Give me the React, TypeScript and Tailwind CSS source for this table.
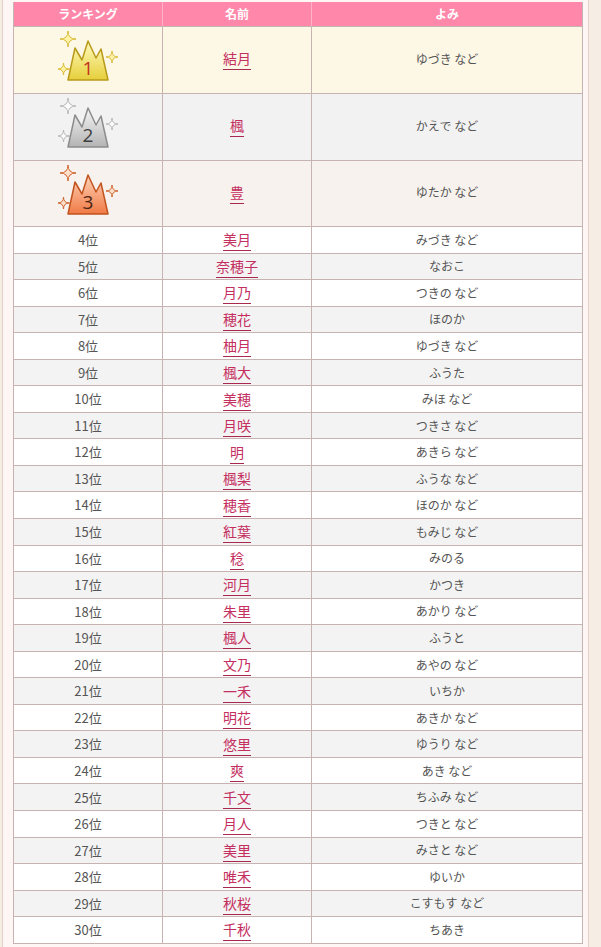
import React from "react";

type Row = { rank: number; name: string; yomi: string };

const rows: Row[] = [
  { rank: 4, name: "美月", yomi: "みづき など" },
  { rank: 5, name: "奈穂子", yomi: "なおこ" },
  { rank: 6, name: "月乃", yomi: "つきの など" },
  { rank: 7, name: "穂花", yomi: "ほのか" },
  { rank: 8, name: "柚月", yomi: "ゆづき など" },
  { rank: 9, name: "楓大", yomi: "ふうた" },
  { rank: 10, name: "美穂", yomi: "みほ など" },
  { rank: 11, name: "月咲", yomi: "つきさ など" },
  { rank: 12, name: "明", yomi: "あきら など" },
  { rank: 13, name: "楓梨", yomi: "ふうな など" },
  { rank: 14, name: "穂香", yomi: "ほのか など" },
  { rank: 15, name: "紅葉", yomi: "もみじ など" },
  { rank: 16, name: "稔", yomi: "みのる" },
  { rank: 17, name: "河月", yomi: "かつき" },
  { rank: 18, name: "朱里", yomi: "あかり など" },
  { rank: 19, name: "楓人", yomi: "ふうと" },
  { rank: 20, name: "文乃", yomi: "あやの など" },
  { rank: 21, name: "一禾", yomi: "いちか" },
  { rank: 22, name: "明花", yomi: "あきか など" },
  { rank: 23, name: "悠里", yomi: "ゆうり など" },
  { rank: 24, name: "爽", yomi: "あき など" },
  { rank: 25, name: "千文", yomi: "ちふみ など" },
  { rank: 26, name: "月人", yomi: "つきと など" },
  { rank: 27, name: "美里", yomi: "みさと など" },
  { rank: 28, name: "唯禾", yomi: "ゆいか" },
  { rank: 29, name: "秋桜", yomi: "こすもす など" },
  { rank: 30, name: "千秋", yomi: "ちあき" },
];

type CrownTheme = {
  id: string;
  top: string;
  bottom: string;
  stroke: string;
  sparkFill: string;
  sparkStroke: string;
  num: string;
  label: string;
};

const themes: CrownTheme[] = [
  { id: "g", top: "#fffbc0", bottom: "#e6cf3a", stroke: "#b89a1a", sparkFill: "#fff3a6", sparkStroke: "#d9bb3a", num: "#c0301e", label: "1" },
  { id: "s", top: "#f6f6f6", bottom: "#b4b4b4", stroke: "#8c8c8c", sparkFill: "#fbfbfb", sparkStroke: "#b8b8b8", num: "#3f3f3f", label: "2" },
  { id: "b", top: "#ffd2b8", bottom: "#f07a45", stroke: "#c0531e", sparkFill: "#ffe0cc", sparkStroke: "#d0642e", num: "#4a2414", label: "3" },
];

function sparkle(cx: number, cy: number, r: number) {
  return `M ${cx} ${cy - r} Q ${cx} ${cy} ${cx + r} ${cy} Q ${cx} ${cy} ${cx} ${cy + r} Q ${cx} ${cy} ${cx - r} ${cy} Q ${cx} ${cy} ${cx} ${cy - r} Z`;
}

function Crown({ t }: { t: CrownTheme }) {
  return (
    <svg width="60" height="56" viewBox="0 0 60 56" className="block">
      <defs>
        <linearGradient id={`grad-${t.id}`} x1="0" y1="0" x2="0" y2="1">
          <stop offset="0" stopColor={t.top} />
          <stop offset="1" stopColor={t.bottom} />
        </linearGradient>
      </defs>
      <path d={sparkle(10, 9, 8)} fill={t.sparkFill} stroke={t.sparkStroke} strokeWidth="1" strokeLinejoin="round" />
      <path d={sparkle(54, 27, 6)} fill={t.sparkFill} stroke={t.sparkStroke} strokeWidth="1" strokeLinejoin="round" />
      <path d={sparkle(5.5, 39, 6)} fill={t.sparkFill} stroke={t.sparkStroke} strokeWidth="1" strokeLinejoin="round" />
      <polygon
        points="10,50 17,18 24,30 30,11 38,28 43,19 50,50"
        fill={`url(#grad-${t.id})`}
        stroke={t.stroke}
        strokeWidth="1.5"
        strokeLinejoin="round"
      />
      <text
        x="30"
        y="45"
        textAnchor="middle"
        fontSize="19"
        fill={t.num}
        fontFamily="'Open Sans', 'Noto Sans', sans-serif"
      >
        {t.label}
      </text>
    </svg>
  );
}

function Name({ children }: { children: React.ReactNode }) {
  return (
    <span className="inline-block border-b border-[#a8284f] text-[14px] leading-[22px] text-[#c42f5f]">
      {children}
    </span>
  );
}

const top3 = [
  { name: "結月", yomi: "ゆづき など", bg: "bg-[#fdf7e6]", h: "h-[67px]" },
  { name: "楓", yomi: "かえで など", bg: "bg-[#f2f2f2]", h: "h-[67px]" },
  { name: "豊", yomi: "ゆたか など", bg: "bg-[#f7f2ee]", h: "h-[66px]" },
];

export default function App() {
  return (
    <div className="min-h-[947px] bg-[#f6ede4] pl-[2px] font-['Noto_Sans_CJK_JP','Noto_Sans',sans-serif]">
      <div className="w-[587px] border-x border-[#e6cfc7] bg-[#fdf6f4] pl-[10px] pt-[2px] pb-[10px]">
        <div className="w-[570px] border-x border-b border-[#c8b3b3]">
          <div className="flex h-[24px] bg-[#ff88aa] text-[12px] font-bold text-white">
            <div className="flex w-[149px] items-center justify-center border-r border-[#ffb1c8]">ランキング</div>
            <div className="flex w-[149px] items-center justify-center border-r border-[#ffb1c8]">名前</div>
            <div className="flex flex-1 items-center justify-center">よみ</div>
          </div>
          {top3.map((r, i) => (
            <div key={r.name} className={`flex ${r.h} ${r.bg} border-t border-[#c8b3b3]`}>
              <div className="flex w-[149px] items-center justify-center border-r border-[#c8b3b3] pb-[4px]">
                <Crown t={themes[i]} />
              </div>
              <div className="flex w-[149px] items-center justify-center border-r border-[#c8b3b3] pb-[3px]">
                <Name>{r.name}</Name>
              </div>
              <div className="flex flex-1 items-center justify-center pb-[3px] text-[12px] text-[#555555]">{r.yomi}</div>
            </div>
          ))}
          {rows.map((r) => (
            <div
              key={r.rank}
              className={`flex h-[26.55px] border-t border-[#c8b3b3] ${r.rank % 2 === 0 ? "bg-white" : "bg-[#f3f3f3]"}`}
            >
              <div className="flex w-[149px] items-center justify-center border-r border-[#c8b3b3] text-[13px] text-[#555555]">
                {r.rank}位
              </div>
              <div className="flex w-[149px] items-center justify-center border-r border-[#c8b3b3]">
                <Name>{r.name}</Name>
              </div>
              <div className="flex flex-1 items-center justify-center text-[12px] text-[#555555]">{r.yomi}</div>
            </div>
          ))}
        </div>
      </div>
    </div>
  );
}
